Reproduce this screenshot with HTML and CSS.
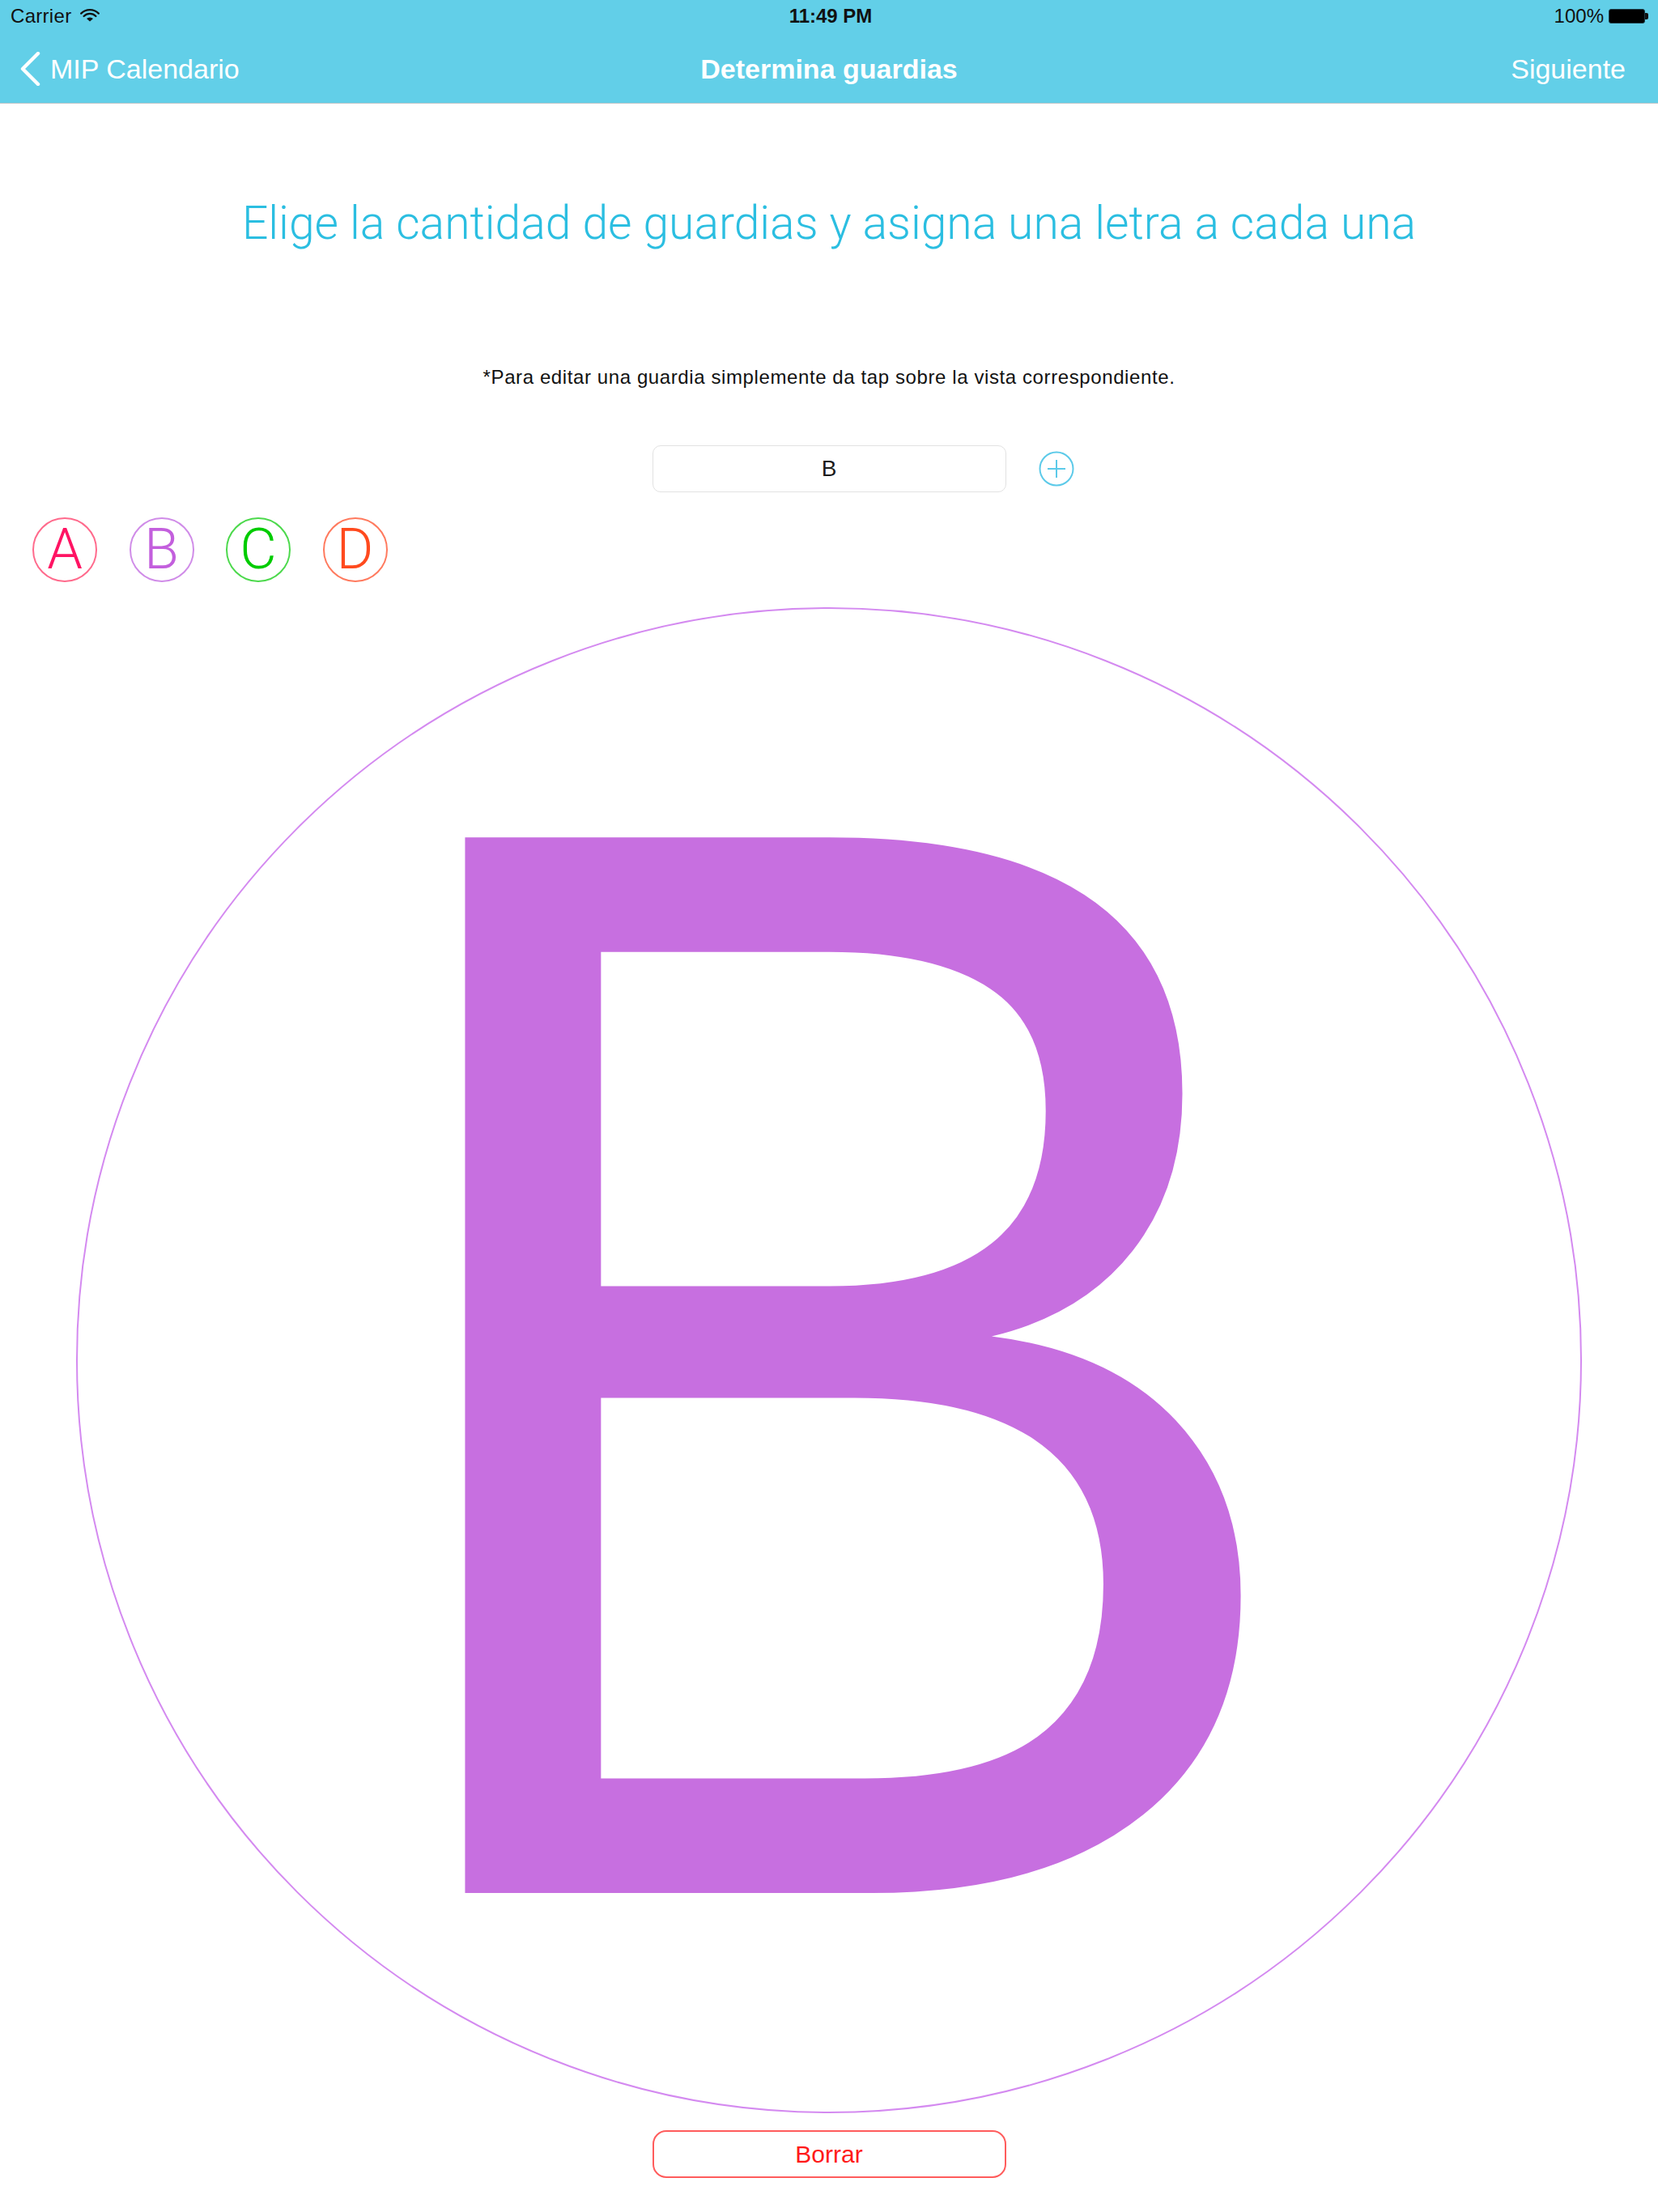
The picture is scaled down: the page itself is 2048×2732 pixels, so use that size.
FILE: index.html
```html
<!DOCTYPE html>
<html lang="es">
<head>
<meta charset="utf-8">
<title>Determina guardias</title>
<link rel="stylesheet" href="styles.css">
</head>
<body>
<header class="topbar">
  <div class="status">
    <div class="status-left">
      <span class="carrier">Carrier</span>
      <svg class="wifi" width="24" height="16" viewBox="0 0 24 16">
        <path d="M1.2 5.6 A15.5 15.5 0 0 1 22.8 5.6" fill="none" stroke="#111" stroke-width="2.3" stroke-linecap="round"/>
        <path d="M4.6 9 A10.5 10.5 0 0 1 19.4 9" fill="none" stroke="#111" stroke-width="2.3" stroke-linecap="round"/>
        <path d="M12 15.5 L8 12 A6 6 0 0 1 16 12 Z" fill="#111"/>
      </svg>
    </div>
    <div class="time">11:49 PM</div>
    <div class="status-right">
      <span class="pct">100%</span>
      <span class="battery"><span class="battery-body"></span><span class="battery-nub"></span></span>
    </div>
  </div>
  <nav class="navbar">
    <div class="nav-left">
      <svg class="chevron" width="26" height="42" viewBox="0 0 26 42">
        <path d="M23 2 L4 21 L23 40" fill="none" stroke="#fff" stroke-width="4.4" stroke-linecap="round" stroke-linejoin="round"/>
      </svg>
      <span class="back-label">MIP Calendario</span>
    </div>
    <div class="nav-title">Determina guardias</div>
    <div class="nav-right">Siguiente</div>
  </nav>
</header>

<main class="content">
  <h1 class="title">Elige la cantidad de guardias y asigna una letra a cada una</h1>
  <p class="hint">*Para editar una guardia simplemente da tap sobre la vista correspondiente.</p>

  <div class="field-row">
    <div class="spacer"></div>
    <div class="field">B</div>
    <div class="add-cell">
      <svg class="add" width="44" height="44" viewBox="0 0 44 44">
        <circle cx="22" cy="22" r="20.5" fill="none" stroke="#5CCAE9" stroke-width="2"/>
        <path d="M22 11 V33 M11 22 H33" stroke="#5CCAE9" stroke-width="2"/>
      </svg>
    </div>
  </div>

  <div class="guards">
    <div class="guard guard-a">A</div>
    <div class="guard guard-b">B</div>
    <div class="guard guard-c">C</div>
    <div class="guard guard-d">D</div>
  </div>

  <div class="big-circle">
    <span class="big-letter">B</span>
  </div>

  <button class="delete">Borrar</button>
</main>
</body>
</html>
```

FILE: styles.css
```css
* { box-sizing: border-box; }

html, body {
  margin: 0;
  padding: 0;
  background: #ffffff;
}

body {
  width: 2048px;
  height: 2732px;
  overflow: hidden;
  font-family: "Liberation Sans", Arial, sans-serif;
}

.topbar {
  background: #62CFE8;
  border-bottom: 1px solid #b9c4c8;
}

.status {
  height: 40px;
  display: grid;
  grid-template-columns: 1fr auto 1fr;
  align-items: center;
  padding: 0 12px;
  font-size: 24px;
  line-height: 40px;
  color: #111;
}

.status-left {
  display: flex;
  align-items: center;
  gap: 11px;
  padding-left: 1px;
}

.carrier { letter-spacing: 0.3px; }

.wifi { margin-top: -2px; }

.time {
  font-weight: bold;
  text-align: center;
  padding-left: 4px;
}

.status-right {
  display: flex;
  justify-content: flex-end;
  align-items: center;
  gap: 6px;
}

.battery {
  display: flex;
  align-items: center;
}

.battery-body {
  width: 45px;
  height: 18px;
  background: #000;
  border: 1.5px solid #1c3a44;
  border-radius: 3px;
}

.battery-nub {
  width: 4px;
  height: 8px;
  background: #111;
  border-radius: 0 2px 2px 0;
}

.navbar {
  height: 87px;
  padding: 4px 24px 0 24px;
  display: grid;
  grid-template-columns: 1fr auto 1fr;
  align-items: center;
  color: #ffffff;
  font-size: 34px;
}

.nav-left {
  display: flex;
  align-items: center;
  gap: 12px;
}

.chevron { margin-top: -2px; }

.nav-title {
  font-weight: bold;
  font-size: 34px;
  text-align: center;
}

.nav-right {
  text-align: right;
  padding-right: 16px;
}

.content {
  display: flex;
  flex-direction: column;
  align-items: center;
}

.title {
  margin: 113px 0 0;
  font-family: Roboto, "Liberation Sans", sans-serif;
  font-weight: 300;
  font-size: 57px;
  line-height: 70px;
  color: #2BBEE1;
  text-align: center;
}

.hint {
  margin: 140px 0 0;
  font-size: 24px;
  letter-spacing: 0.6px;
  line-height: 30px;
  color: #111;
  text-align: center;
}

.field-row {
  margin-top: 69px;
  width: 100%;
  display: grid;
  grid-template-columns: 1fr 437px 1fr;
  align-items: center;
}

.field {
  height: 58px;
  border: 1px solid #e2e2e2;
  border-radius: 10px;
  font-size: 28px;
  line-height: 56px;
  text-align: center;
  color: #1a1a1a;
}

.add-cell {
  display: flex;
  padding-left: 40px;
}

.guards {
  align-self: stretch;
  margin-top: 31px;
  padding-left: 40px;
  display: flex;
  gap: 39.5px;
}

.guard {
  width: 80px;
  height: 80px;
  border-radius: 50%;
  border: 2px solid;
  font-family: Roboto, "Liberation Sans", sans-serif;
  font-weight: 300;
  font-size: 70px;
  line-height: 74px;
  text-align: center;
}

.guard-a { color: #FF1463; border-color: #FF6A8C; }
.guard-b { color: #C35FDD; border-color: #D08CE8; }
.guard-c { color: #00CC00; border-color: #4CD94C; }
.guard-d { color: #FF4A1E; border-color: #FF7A5E; }

.big-circle {
  margin-top: 31px;
  width: 1860px;
  height: 1860px;
  border: 2px solid #D48AF0;
  border-radius: 50%;
  display: flex;
  align-items: center;
  justify-content: center;
}

.big-letter {
  font-size: 1895px;
  line-height: normal;
  padding-top: 3px;
  color: #C76FE0;
  transform: scaleX(0.95);
  transform-origin: 55% 50%;
}

.delete {
  margin-top: 21px;
  width: 437px;
  height: 59px;
  border: 2px solid #FF5C5C;
  border-radius: 17px;
  background: #fff;
  font-family: "Liberation Sans", Arial, sans-serif;
  font-size: 30px;
  color: #FF1A1A;
  padding: 0;
}
```
